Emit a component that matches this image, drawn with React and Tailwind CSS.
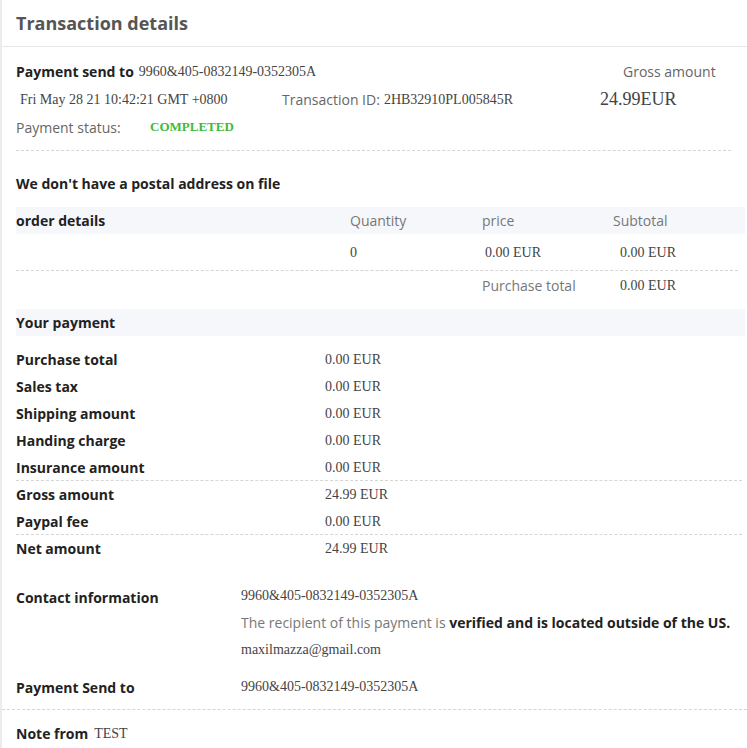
const sans = "font-['Open_Sans',sans-serif]";
const serif = "font-['Liberation_Serif',serif]";

const PAYMENT_ROWS = [
  { label: 'Purchase total', value: '0.00 EUR' },
  { label: 'Sales tax', value: '0.00 EUR' },
  { label: 'Shipping amount', value: '0.00 EUR' },
  { label: 'Handing charge', value: '0.00 EUR' },
  { label: 'Insurance amount', value: '0.00 EUR', divider: true },
  { label: 'Gross amount', value: '24.99 EUR' },
  { label: 'Paypal fee', value: '0.00 EUR', divider: true },
  { label: 'Net amount', value: '24.99 EUR' },
];

const RECIPIENT = '9960&405-0832149-0352305A';

function Value({ children, className = '' }) {
  return <span className={`${serif} text-[14px] text-[#444] ${className}`}>{children}</span>;
}

export default function App() {
  return (
    <div className={`min-h-screen bg-white border-l-2 border-[#ececec] ${sans} text-[14px] text-[#222]`}>
      <div className="h-[47px] px-[14px] flex items-center border-b border-[#e6e6e6] text-[18px] font-bold text-[#555]">
        Transaction details
      </div>

      {/* summary */}
      <div className="ml-[14px] mr-4 pt-[11px] pb-[9px] border-b border-dashed border-[#d6d6d6]">
        <div className="h-[27px] flex items-center">
          <span className="font-bold">Payment send to</span>
          <Value className="ml-[5px]">{RECIPIENT}</Value>
          <span className="ml-auto w-[108px] text-[#666]">Gross amount</span>
        </div>
        <div className="h-[28px] flex items-center">
          <Value className="ml-1 w-[262px]">Fri May 28 21 10:42:21 GMT +0800</Value>
          <span className="text-[#666]">Transaction ID:</span>
          <Value className="ml-1 text-[13px]">2HB32910PL005845R</Value>
          <Value className="ml-auto w-[131px] text-[18px] text-[#333]">24.99EUR</Value>
        </div>
        <div className="h-[28px] flex items-center">
          <span className="w-[134px] text-[#666]">Payment status:</span>
          <span className={`${serif} text-[13px] font-bold text-[#3dbb3d]`}>COMPLETED</span>
        </div>
      </div>

      <div className="ml-[14px] h-[56px] pt-[9px] flex items-center font-bold">
        We don't have a postal address on file
      </div>

      {/* order details */}
      <div className="ml-[14px] mr-[2px]">
        <div className="h-[27px] grid grid-cols-[334px_132px_131px_1fr] items-center bg-[#f6f7fb]">
          <span className="font-bold">order details</span>
          <span className="text-[#777]">Quantity</span>
          <span className="text-[#777]">price</span>
          <span className="text-[#777]">Subtotal</span>
        </div>
        <div className="h-[37px] mr-[7px] grid grid-cols-[334px_132px_131px_1fr] items-center border-b border-dashed border-[#d6d6d6]">
          <span />
          <Value className="text-[13px]">0</Value>
          <Value className="ml-[3px] text-[13px]">0.00 EUR</Value>
          <Value className="ml-[7px] text-[13px]">0.00 EUR</Value>
        </div>
        <div className="h-[29px] grid grid-cols-[334px_132px_131px_1fr] items-center">
          <span />
          <span />
          <span className="text-[#777]">Purchase total</span>
          <Value className="ml-[7px] text-[13px]">0.00 EUR</Value>
        </div>
        <div className="mt-[9px] h-[27px] flex items-center bg-[#f6f7fb] font-bold">Your payment</div>
      </div>

      {/* payment breakdown */}
      <div className="ml-[14px] mr-[5px] mt-[10px]">
        {PAYMENT_ROWS.map((row) => (
          <div
            key={row.label}
            className={`h-[27px] grid grid-cols-[309px_1fr] items-center ${row.divider ? 'border-b border-dashed border-[#d6d6d6]' : ''}`}
          >
            <span className="font-bold">{row.label}</span>
            <Value className="text-[13px]">{row.value}</Value>
          </div>
        ))}
      </div>

      {/* contact */}
      <div className="ml-[14px] mt-[20px] grid grid-cols-[225px_1fr]">
        <span className="h-[27px] pt-[3px] flex items-center font-bold">Contact information</span>
        <div>
          <div className="h-[27px] flex items-center"><Value className="text-[13px]">{RECIPIENT}</Value></div>
          <div className="h-[27px] flex items-center whitespace-nowrap text-[#777]">
            The recipient of this payment is&nbsp;<span className="font-bold text-[#222]">verified and is located outside of the US.</span>
          </div>
          <div className="h-[27px] flex items-center"><Value className="text-[13px]">maxilmazza@gmail.com</Value></div>
        </div>
        <span className="mt-[9px] h-[28px] pt-[3px] flex items-center font-bold">Payment Send to</span>
        <div className="mt-[9px] h-[28px] flex items-center"><Value className="text-[13px]">{RECIPIENT}</Value></div>
      </div>

      <div className="mt-[9px] border-t border-dashed border-[#d6d6d6]" />

      <div className="ml-[14px] h-[38px] pt-[8px] flex items-center">
        <span className="font-bold">Note from</span>
        <Value className="ml-[6px] text-[13px]">TEST</Value>
      </div>
    </div>
  );
}
